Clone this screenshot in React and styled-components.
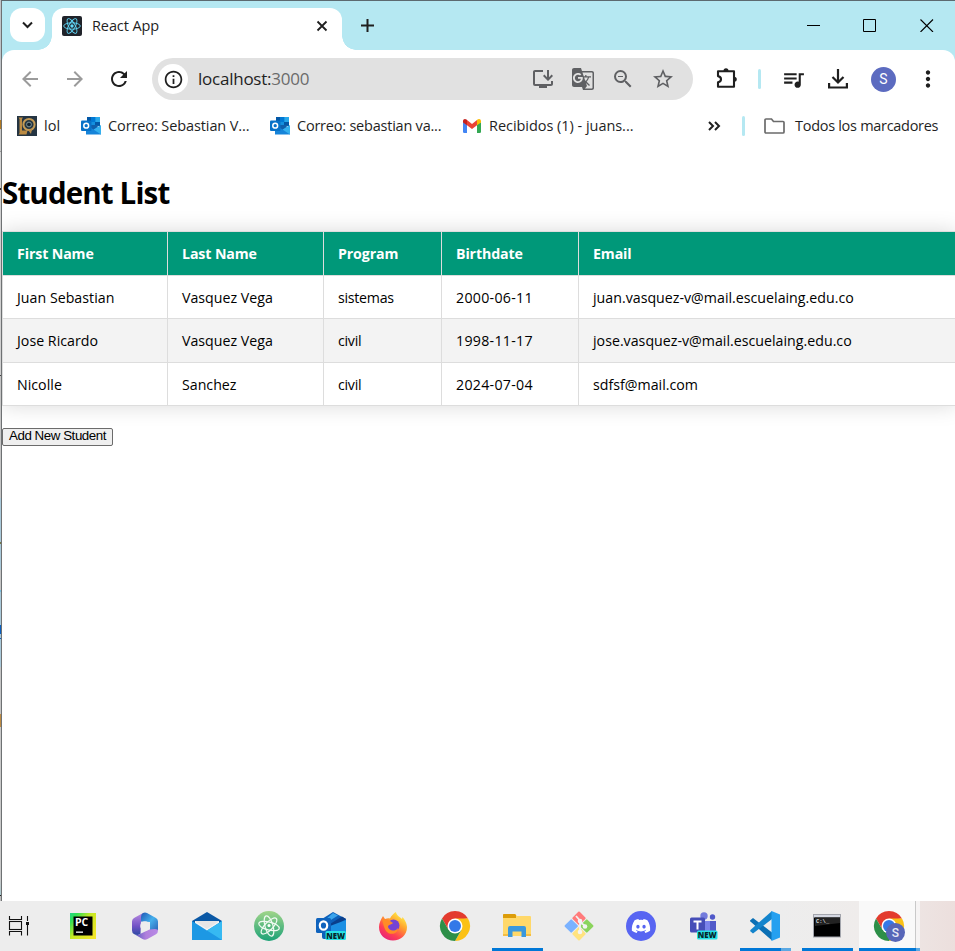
import React from 'react';
import styled, { createGlobalStyle } from 'styled-components';
import {
  MdArrowBack, MdArrowForward, MdRefresh, MdInfoOutline, MdOutlineInstallDesktop,
  MdGTranslate, MdZoomOut, MdStarBorder, MdQueueMusic, MdMoreVert,
} from 'react-icons/md';
import { FaDiscord } from 'react-icons/fa';

const GlobalStyle = createGlobalStyle`
  * { box-sizing: border-box; }
  body { margin: 0; background: #fff; overflow: hidden; font-family: "Open Sans", "Noto Sans", sans-serif; color: #000; }
  svg { display: block; flex: none; }
`;

const Desktop = styled.div`
  width: 955px; height: 951px; display: flex; flex-direction: column; overflow: hidden;
`;
const WindowArea = styled.div`
  flex: none; height: 901px; display: flex;
`;
const BackdropStrip = styled.div`
  width: 1px; flex: none;
  background: linear-gradient(to bottom, #bfc4c8 0 120px, #b27a22 120px 129px, #c9c9c9 129px 151px, #999 151px 152px,
    #d4d4d4 152px 188px, #333 188px 190px, #d0d0d0 190px 375px, #444 375px 376px, #c5c5c5 376px 498px, #a9c9da 498px 542px,
    #777748 542px 544px, #a9c9da 544px 570px, #c5c5c5 570px 590px, #79bede 590px 592px, #a9c9da 592px 625px,
    #0a5fc0 625px 634px, #a9c9da 634px 638px, #0a5fc0 638px 639px, #a9c9da 639px 667px, #c5c5c5 667px 714px,
    #bd8b43 714px 727px, #c9c9c9 727px 880px, #a9c9cf 895px, #222 895px 896px, #bbb 896px);
`;
const BrowserWindow = styled.div`
  width: 954px; flex: none; border-left: 1px solid #6e7173; border-top: 1px solid #5c6a70;
  display: flex; flex-direction: column; background: #b5e8f2; overflow: hidden;
`;

const TabStrip = styled.div`
  height: 49px; flex: none; display: flex; align-items: flex-start; padding: 7px 0 0 8px;
`;
const TabSearch = styled.div`
  width: 35px; height: 34px; border-radius: 12px; background: #fff; margin-right: 7px;
  display: flex; align-items: center; justify-content: center;
`;
const Tab = styled.div`
  position: relative; width: 290px; height: 42px; background: #fff; border-radius: 12px 12px 0 0;
  display: flex; align-items: center; padding: 0 13px 7px 10px; gap: 10px;
  &::before, &::after {
    content: ""; position: absolute; bottom: 0; width: 14px; height: 14px;
  }
  &::before { left: -14px; background: radial-gradient(circle at 0 0, transparent 13.5px, #fff 14px); }
  &::after { right: -14px; background: radial-gradient(circle at 100% 0, transparent 13.5px, #fff 14px); }
`;
const Label = styled.span`
  font-size: ${p => p.$size || 14.5}px; letter-spacing: ${p => p.$ls || 0}px; color: ${p => p.$color || '#1f1f1f'};
  white-space: pre; line-height: 20px;
`;
const Spacer = styled.div`flex: 1;`;
const NewTab = styled.div`
  height: 34px; display: flex; align-items: center; margin-left: 18px;
`;
const CaptionButtons = styled.div`
  height: 35px; display: flex; align-items: center; gap: 43px; padding-right: 21px;
`;

const Toolbar = styled.div`
  height: 58px; flex: none; background: #fff; border-radius: 12px 12px 0 0;
  display: flex; align-items: center; padding: 0 14px 0 16px;
`;
const NavButtons = styled.div`
  display: flex; align-items: center; gap: 20.7px; width: 134px;
`;
const AddressBar = styled.div`
  width: 541px; height: 42px; border-radius: 21px; background: #e1e1e1;
  display: flex; align-items: center; padding: 0 18px 0 6px;
`;
const SiteInfo = styled.div`
  width: 30px; height: 30px; border-radius: 50%; background: #fff; margin-right: 10px;
  display: flex; align-items: center; justify-content: center;
`;
const AddressActions = styled.div`
  display: flex; align-items: center; gap: 16px; color: #5f6063;
`;
const ToolbarActions = styled.div`
  flex: 1; display: flex; align-items: center; padding-left: 23px;
`;
const Gap = styled.div`width: ${p => p.$w}px; flex: none;`;
const Divider = styled.div`
  width: 3px; height: 20px; border-radius: 2px; background: #b5e8f2; flex: none;
`;
const Avatar = styled.div`
  width: 25px; height: 25px; border-radius: 50%; background: #5c6bc0; color: #fff; flex: none;
  font: 14px/25px Roboto, sans-serif; text-align: center;
`;

const BookmarksBar = styled.div`
  height: 38px; flex: none; background: #fff; display: flex; align-items: center;
  padding: 0 0 2px 15px;
`;
const Bookmark = styled.div`
  display: flex; align-items: center; gap: ${p => p.$gap || 7}px; width: ${p => p.$w}px;
`;

const Page = styled.main`
  flex: 1; background: #fff; overflow: hidden;
`;
const Title = styled.h1`
  margin: 27px 0 0; height: 58px; font-size: 29.5px; line-height: 40px; font-weight: 700;
  letter-spacing: ${p => p.$ls}px; white-space: nowrap;
`;
const StudentTable = styled.table`
  width: 955px; table-layout: fixed; border-spacing: 0; border: solid #ddd; border-width: 1px 0 0 1px;
  box-shadow: 0 0 20px rgba(0, 0, 0, .15); font-size: 14.2px;
`;
const Col = styled.col`width: ${p => p.$w}px;`;
const Row = styled.tr`
  height: ${p => p.$h}px; background: ${p => p.$bg};
`;
const HeadCell = styled.th`
  padding: 0 14px; text-align: left; color: #fff; font-weight: 700; border: solid #ddd; border-width: 0 1px 1px 0;
  letter-spacing: -.12px; white-space: nowrap;
`;
const Cell = styled.td`
  padding: 0 14px; border: solid #ddd; border-width: 0 1px 1px 0; letter-spacing: ${p => p.$ls}px; white-space: nowrap;
`;
const AddButton = styled.button`
  display: block; margin: 22px 0 0; width: 111px; height: 18px; padding: 0 0 2px; border: 1px solid #6b6b6b; border-radius: 2px;
  background: #efefef; color: #000; font: 13.33px/14px "Liberation Sans", Arial, sans-serif; white-space: nowrap;
  letter-spacing: -.45px;
`;

const Taskbar = styled.div`
  height: 50px; flex: none; display: flex; background: linear-gradient(to right, #ededed 0 780px, #efeceb 860px, #ecdfdd);
`;
const TaskViewCell = styled.div`
  width: 52px; display: flex; align-items: center; padding-left: 8px;
`;
const TaskCell = styled.div`
  position: relative; width: 62px; display: flex; align-items: center; justify-content: center;
`;
const ActiveCell = styled(TaskCell)`
  background: linear-gradient(to right, transparent 0 1px, #f9f9f9 1px 57px, #c9c9c9 57px 58px, #f6f4f4 58px 62px);
`;
const Underline = styled.div`
  position: absolute; bottom: 0; left: ${p => p.$l}px; width: ${p => p.$w}px; height: 3px;
  background: linear-gradient(to right, #0078d7 ${p => p.$solid}px, #5ca9e3 ${p => p.$solid}px);
`;

const ReactIcon = () => (
  <svg width="20" height="20" viewBox="0 0 20 20">
    <rect width="20" height="20" rx="2" fill="#20232a" />
    <g fill="none" stroke="#61dafb" strokeWidth=".9">
      <ellipse cx="10" cy="10" rx="8.3" ry="3.2" />
      <ellipse cx="10" cy="10" rx="8.3" ry="3.2" transform="rotate(60 10 10)" />
      <ellipse cx="10" cy="10" rx="8.3" ry="3.2" transform="rotate(120 10 10)" />
    </g>
    <circle cx="10" cy="10" r="1.7" fill="#61dafb" />
  </svg>
);
const Stroke = ({ w, h = w, d, sw = 2, color = '#1f1f1f', cap }) => (
  <svg width={w} height={h} viewBox={`0 0 ${w} ${h}`}>
    <path d={d} fill="none" stroke={color} strokeWidth={sw} strokeLinecap={cap} />
  </svg>
);
const Puzzle = () => (
  <svg width="22" height="22" viewBox="0 0 22 22">
    <path d="M2 3.2H18V18.700H2V14.300C4 13.900 5 12.700 5 11.200C5 9.700 4 8.500 2 8.100Z" fill="none" stroke="#1f1f1f" strokeWidth="2.1" strokeLinejoin="round" />
    <path d="M7.500 3A2.500 2.800 0 0 1 12.500 3ZM18 8.700A2.800 2.500 0 0 1 18 13.700Z" fill="#1f1f1f" />
  </svg>
);
const LolIcon = () => (
  <svg width="20" height="20" viewBox="0 0 20 20">
    <rect width="20" height="20" fill="#253543" />
    <path d="M1.5 1.5H6L5 3V14.5H10.5L9.5 18.5H1.5L2.5 17V3Z" fill="#bb8b43" />
    <circle cx="12" cy="8.5" r="5.6" fill="#263641" stroke="#c49a54" strokeWidth="2" />
    <circle cx="12" cy="8.5" r="2.4" fill="#15232c" stroke="#82969b" strokeWidth="1" />
    <path d="M11 14l3 4 1-5" fill="#b78b4b" />
  </svg>
);
const OutlookIcon = () => (
  <svg width="20" height="18" viewBox="0 0 20 18">
    <path d="M6 0H19V9H6Z" fill="#1490df" />
    <path d="M6 0H10V5H6ZM14 5H19V9H14Z" fill="#0358a7" />
    <path d="M10 0H14.500V5H10Z" fill="#0078d4" /><path d="M14.500 0H19V5H14.500Z" fill="#28a8ea" />
    <path d="M5 17.500V8H12L20 12V17.500Z" fill="#1684d9" />
    <path d="M20 8V17.500L12.500 12.500Z" fill="#35b0ee" />
    <path d="M6 8H19L12.500 12.500Z" fill="#0f5fab" />
    <rect y="3.500" width="10.500" height="10.500" rx="1" fill="#0872c8" />
    <circle cx="5.200" cy="8.700" r="2.400" fill="none" stroke="#fff" strokeWidth="1.500" />
  </svg>
);
const GmailIcon = () => (
  <svg width="18" height="14" viewBox="0 0 18 14">
    <path d="M0 3L4 5.500V14H1.200Q0 14 0 12.800Z" fill="#4285f4" />
    <path d="M18 3L14 5.500V14H16.800Q18 14 18 12.800Z" fill="#34a853" />
    <path d="M4 1L9 5L14 1V6.200L9 10L4 6.200Z" fill="#ea4335" />
    <path d="M0 2.200C0 .2 2-.6 3.500.6L4 1V6.200L0 3.500Z" fill="#c5221f" />
    <path d="M18 2.200C18 .2 16-.6 14.500.6L14 1V6.200L18 3.500Z" fill="#fbbc04" />
  </svg>
);

const TaskViewIcon = () => (
  <svg width="22" height="20" viewBox="0 0 22 20" fill="none" stroke="#111" strokeWidth="1.1">
    <path d="M1.500 0V3.500H13.500V0M1.500 19.500V15.500H13.500V19.500M19.500 0V5M19.500 9V19.500" />
    <rect x="1.500" y="5.500" width="12" height="8" />
    <rect x="18" y="6" width="3" height="3" fill="#111" stroke="none" />
  </svg>
);
const PyCharmIcon = () => (
  <svg width="26" height="26" viewBox="0 0 26 26">
    <defs><linearGradient id="pc" x1="0" y1="0" x2="1" y2=".8">
      <stop offset="0" stopColor="#21d789" /><stop offset=".18" stopColor="#30e054" /><stop offset=".5" stopColor="#c6e823" /><stop offset="1" stopColor="#f2e62a" />
    </linearGradient></defs>
    <rect width="26" height="26" fill="url(#pc)" />
    <rect x="3.500" y="3.500" width="19" height="19" fill="#000" />
    <text x="5" y="13" fontFamily="Open Sans" fontWeight="700" fontSize="10.500" fill="#fff">PC</text>
    <rect x="6" y="18.500" width="7" height="1.300" fill="#fff" />
  </svg>
);
const M365Icon = () => (
  <svg width="28" height="28" viewBox="0 0 28 28">
    <defs>
      <linearGradient id="ma" x1="0" y1="0" x2="0" y2="1"><stop offset="0" stopColor="#b98be0" /><stop offset=".6" stopColor="#7152c6" /><stop offset="1" stopColor="#2f4aa4" /></linearGradient>
      <linearGradient id="mb" x1="0" y1="0" x2="1" y2="1"><stop offset="0" stopColor="#1f57b5" /><stop offset=".5" stopColor="#45b0ec" /><stop offset="1" stopColor="#2b5fb4" /></linearGradient>
      <linearGradient id="mc" x1="0" y1="0" x2="1" y2="0"><stop offset="0" stopColor="#4e56c0" /><stop offset=".5" stopColor="#b07fdc" /><stop offset="1" stopColor="#b88ae6" /></linearGradient>
    </defs>
    <path d="M12 1L3 6Q1 7.200 1 9.500V18.500Q1 21 3 22Q6 24 9.500 22L10 9.500L15 7Z" fill="url(#ma)" />
    <path d="M12 1Q14 0 16 1L25 6Q27 7.200 27 9.500V18L22 20L19 18V10L10 9.500V5Q10 2 12 1Z" fill="url(#mb)" />
    <path d="M27 18.500Q27 21 25 22.200L16.500 27Q14 28.300 11.500 27L3 22Q7 24 10 21.500L18.500 17.500L24 17Q27 17 27 18.500Z" fill="url(#mc)" />
    <circle cx="14" cy="14" r="4.800" fill="#ededed" />
  </svg>
);
const MailIcon = () => (
  <svg width="30" height="28" viewBox="0 0 30 28">
    <path d="M0 9L15 0L30 9V12H0Z" fill="#0a58a5" />
    <path d="M3 9H27V20H3Z" fill="#f3f3f3" /><path d="M3 9H27L15 17Z" fill="#d8d8da" opacity=".5" />
    <path d="M0 9L15 18.500L30 9V28H0Z" fill="#1d98e4" /><path d="M30 9V28L15 18.500Z" fill="#36b9f2" />
  </svg>
);
const AtomIcon = () => (
  <svg width="30" height="30" viewBox="0 0 30 30">
    <defs><linearGradient id="at" x1="0" y1="0" x2="0" y2="1"><stop offset="0" stopColor="#a1d58a" /><stop offset="1" stopColor="#1ca277" /></linearGradient></defs>
    <circle cx="15" cy="15" r="15" fill="url(#at)" />
    <g fill="none" stroke="#f2faf3" strokeWidth="1.200">
      <ellipse cx="15" cy="15" rx="10.500" ry="4" transform="rotate(14 15 15)" />
      <ellipse cx="15" cy="15" rx="10.500" ry="4" transform="rotate(74 15 15)" />
      <ellipse cx="15" cy="15" rx="10.500" ry="4" transform="rotate(134 15 15)" />
    </g>
    <circle cx="15" cy="14.500" r="1.500" fill="#fff" />
  </svg>
);
const NewBadge = ({ x, y }) => (
  <g transform={`translate(${x} ${y})`}>
    <rect width="20.500" height="9" rx="1.500" fill="#27e1e5" />
    <text x="10.200" y="7.500" textAnchor="middle" fontFamily="Open Sans" fontWeight="800" fontSize="7.800" fill="#06262a">NEW</text>
  </g>
);
const OutlookNewIcon = () => (
  <svg width="30" height="28" viewBox="0 0 30 28">
    <path d="M6 7L17 0L30 7V25Q30 27 28 27H8Q6 27 6 25Z" fill="#0d5fb9" />
    <path d="M10 7L17 1L22 3.500L10 11Z" fill="#3aa4ec" /><path d="M14 12L26 4.500L30 7L16 16Z" fill="#0a3f8c" />
    <path d="M14 14L30 8V27H14Z" fill="#1c8fe3" />
    <rect y="6" width="15" height="15" rx="1.500" fill="#0f63bd" />
    <ellipse cx="7.500" cy="13.500" rx="3.700" ry="4.200" fill="none" stroke="#fff" strokeWidth="2.200" />
    <NewBadge x="9.500" y="19" />
  </svg>
);
const FirefoxIcon = () => (
  <svg width="30" height="30" viewBox="0 0 30 30">
    <defs>
      <linearGradient id="ff" x1=".85" y1=".1" x2=".25" y2="1"><stop offset="0" stopColor="#fff04a" /><stop offset=".35" stopColor="#ffa02d" /><stop offset=".7" stopColor="#ff4052" /><stop offset="1" stopColor="#e61f7c" /></linearGradient>
    </defs>
    <path d="M1 16C1 12 3 8 5 5L7 8C9 7 11 7 12 7.500C13 5 16 2 18 1C18 4 22 6 24 8L24.500 6C28 10 29 14 29 16C29 24 23 29.500 15 29.500S1 24 1 16Z" fill="url(#ff)" />
    <circle cx="15.500" cy="14.500" r="6" fill="#7543d4" />
    <path d="M4 8C8 8 9 9 12 10L15 12C14 14 10 13 10 16C11 20 17 21 20 17C20 23 12 25 8 20C6 17 5 12 4 8Z" fill="#ff8b26" />
  </svg>
);
const ChromeIcon = ({ badge }) => (
  <svg width="32" height="32" viewBox="-1 -1 32 32">
    <path d="M2 7.500A15 15 0 0 1 28 7.500L15 9L8.500 18.800Z" fill="#e33b2e" />
    <path d="M28 7.500A15 15 0 0 1 15 30L21.500 18.800L15 7.500Z" fill="#fbc116" />
    <path d="M2 7.500A15 15 0 0 0 15 30L21.500 18.800H8.500Z" fill="#2d8f48" />
    <circle cx="15" cy="15" r="7.500" fill="#fff" /><circle cx="15" cy="15" r="6" fill="#3378e8" />
    {badge && <><circle cx="21.500" cy="21.500" r="9.500" fill="#5766b8" /><text x="21.500" y="26" textAnchor="middle" fontFamily="Roboto" fontWeight="500" fontSize="12" fill="#e8eaf6">S</text></>}
  </svg>
);
const ExplorerIcon = () => (
  <svg width="28" height="24" viewBox="0 0 28 24">
    <path d="M0 1Q0 0 1 0H12L14 2H27Q28 2 28 3V22H0Z" fill="#ffd869" /><path d="M0 1Q0 0 1 0H12L13 1V4H0Z" fill="#dc9c08" />
    <path d="M5 23V14Q5 12 7 12H21Q23 12 23 14V23H18.500V17.500H9.500V23Z" fill="#3a98dd" /><path d="M0 20H5V22H0ZM23 20H28V22H23Z" fill="#f4bd42" />
  </svg>
);
const GitIcon = () => (
  <svg width="30" height="30" viewBox="0 0 30 30">
    <g transform="rotate(45 15 15)">
      <rect x="4.500" y="4.500" width="10" height="10" fill="#ff7b7b" rx="1" /><rect x="15.500" y="4.500" width="10" height="10" fill="#8bd45c" rx="1" />
      <rect x="4.500" y="15.500" width="10" height="10" fill="#7ab2ff" rx="1" /><rect x="15.500" y="15.500" width="10" height="10" fill="#ffe37f" rx="1" />
    </g>
    <path d="M12 5L16 9.500V22M16 11L21 15" fill="none" stroke="#f1f1f1" strokeWidth="1.800" />
    <g fill="#f4f4f4"><circle cx="16" cy="10" r="2.300" /><circle cx="16" cy="21" r="2.300" /><circle cx="21" cy="15.500" r="2.300" /></g>
  </svg>
);
const DiscordDisc = styled.div`
  width: 30px; height: 30px; border-radius: 50%; background: #5865f2; display: flex; align-items: center; justify-content: center;
`;
const TeamsIcon = () => (
  <svg width="30" height="28" viewBox="0 0 30 28">
    <circle cx="16" cy="4" r="3.700" fill="#737bdc" /><circle cx="24.500" cy="5" r="2.700" fill="#5059c9" />
    <path d="M20 9H28V18Q28 21 24 22L20 20Z" fill="#5059c9" /><path d="M12 9H22V22H12Z" fill="#7b83eb" />
    <rect x="2" y="5.500" width="15" height="15" rx="1.500" fill="#464eb8" />
    <path d="M5.500 9.500H13.500M9.500 9.500V17.500" stroke="#fff" strokeWidth="2" />
    <NewBadge x="9" y="18.500" />
  </svg>
);
const VsCodeIcon = () => (
  <svg width="30" height="30" viewBox="0 0 30 30">
    <path d="M0 9.500L3 7L22 21.500V29.500L1 11Q0 10.500 0 9.500Z" fill="#0b70b5" />
    <path d="M0 20L3 22.500L22 8V0L1 18.500Q0 19.500 0 20Z" fill="#1384cc" />
    <path d="M21.500 0L30 3.500V26.500L21.500 30Z" fill="#25a0f0" />
  </svg>
);
const TerminalIcon = () => (
  <svg width="28" height="24" viewBox="0 0 28 24">
    <rect x=".5" y=".5" width="27" height="22.500" fill="#000" stroke="#a3a5ac" />
    <rect x="1" y="1" width="26" height="2.500" fill="#d5d8e2" /><path d="M2 12L27 9V3.500H2Z" fill="#222" />
    <text x="3" y="8.500" fontFamily="Liberation Mono" fontSize="5.500" fontWeight="700" fill="#ddd">C:\_</text>
  </svg>
);

const columns = [
  { name: 'First Name', width: 165, ls: 0.02 },
  { name: 'Last Name', width: 156, ls: 0 },
  { name: 'Program', width: 118, ls: -0.27 },
  { name: 'Birthdate', width: 137, ls: 0.28 },
  { name: 'Email', width: 378, ls: 0.01 },
];
const students = [
  { h: 43, bg: '#fff', cells: ['Juan Sebastian', 'Vasquez Vega', 'sistemas', '2000-06-11', 'juan.vasquez-v@mail.escuelaing.edu.co'] },
  { h: 44, bg: '#f3f3f3', cells: ['Jose Ricardo', 'Vasquez Vega', 'civil', '1998-11-17', 'jose.vasquez-v@mail.escuelaing.edu.co'] },
  { h: 43, bg: '#fff', cells: ['Nicolle', 'Sanchez', 'civil', '2024-07-04', 'sdfsf@mail.com'] },
];
const tasks = [
  { icon: <PyCharmIcon /> }, { icon: <M365Icon /> }, { icon: <MailIcon /> }, { icon: <AtomIcon /> },
  { icon: <OutlookNewIcon /> }, { icon: <FirefoxIcon /> }, { icon: <ChromeIcon /> },
  { icon: <ExplorerIcon />, l: 6, w: 51, solid: 51 }, { icon: <GitIcon /> },
  { icon: <DiscordDisc><FaDiscord size={20} color="#fff" /></DiscordDisc> }, { icon: <TeamsIcon /> },
  { icon: <VsCodeIcon />, l: 6, w: 51, solid: 41 }, { icon: <TerminalIcon />, l: 6, w: 51, solid: 51 },
  { icon: <ChromeIcon badge />, l: 1, w: 61, solid: 57, active: true },
];

export default function App() {
  return (
    <Desktop>
      <GlobalStyle />
      <WindowArea>
        <BackdropStrip />
        <BrowserWindow>
          <TabStrip>
            <TabSearch><Stroke w={11} h={8} d="M1 1.500L5.500 6L10 1.500" /></TabSearch>
            <Tab>
              <ReactIcon />
              <Label $ls={-0.1}>React App</Label>
              <Spacer />
              <Stroke w={14} d="M2.500 2.500L11.500 11.500M11.500 2.500L2.500 11.500" sw={1.8} />
            </Tab>
            <NewTab><Stroke w={14} d="M7.500 1V14M1 7.500H14" /></NewTab>
            <Spacer />
            <CaptionButtons>
              <Stroke w={14} h={13} d="M1 6.500H14" sw={1} color="#000" />
              <Stroke w={14} h={13} d="M.5 .5H12.500V12.500H.5Z" sw={1} color="#000" />
              <Stroke w={14} h={13} d="M.5 .5L13 13M13 .5L.5 13" sw={1.1} color="#000" />
            </CaptionButtons>
          </TabStrip>
          <Toolbar>
            <NavButtons>
              <MdArrowBack size={24} color="#9b9b9b" />
              <MdArrowForward size={24} color="#9b9b9b" />
              <MdRefresh size={24} color="#1f1f1f" />
            </NavButtons>
            <AddressBar>
              <SiteInfo><MdInfoOutline size={21} color="#1f1f1f" /></SiteInfo>
              <Label $size={17} $ls={-0.24}>localhost:</Label>
              <Label $size={17} $ls={-0.24} $color="#6b6b6b">3000</Label>
              <Spacer />
              <AddressActions>
                <MdOutlineInstallDesktop size={24} />
                <MdGTranslate size={24} />
                <MdZoomOut size={24} />
                <MdStarBorder size={24} />
              </AddressActions>
            </AddressBar>
            <ToolbarActions>
              <Puzzle />
              <Gap $w={20} />
              <Divider />
              <Gap $w={20} />
              <MdQueueMusic size={25} color="#1f1f1f" />
              <Spacer />
              <Stroke w={20} h={20} d="M10 0V13M4.500 8L10 13.500L15.500 8M1.100 14V18.500H18.900V14" sw={2.2} />
              <Gap $w={23} />
              <Avatar>S</Avatar>
              <Gap $w={19} />
              <MdMoreVert size={26} color="#1f1f1f" />
            </ToolbarActions>
          </Toolbar>
          <BookmarksBar>
            <Bookmark $w={64}><LolIcon /><Label $ls={0.1}>lol</Label></Bookmark>
            <Bookmark $w={189}><OutlookIcon /><Label $ls={-0.1}>Correo: Sebastian V...</Label></Bookmark>
            <Bookmark $w={193}><OutlookIcon /><Label $ls={-0.22}>Correo: sebastian va...</Label></Bookmark>
            <Bookmark $w={244} $gap={8}><GmailIcon /><Label $ls={-0.04}>Recibidos (1) - juans...</Label></Bookmark>
            <Bookmark $w={35}><Stroke w={14} h={10} d="M2 1L6 5L2 9M8 1L12 5L8 9" /></Bookmark>
            <Bookmark $w={22}><Divider /></Bookmark>
            <Bookmark $w={190} $gap={10}>
              <svg width="21" height="16" viewBox="0 0 21 16"><path d="M1 2Q1 1 2 1H7.500L9.500 3.500H19Q20 3.500 20 4.500V14Q20 15 19 15H2Q1 15 1 14Z" fill="none" stroke="#6b6b6b" strokeWidth="1.700" /></svg>
              <Label $ls={-0.29}>Todos los marcadores</Label>
            </Bookmark>
          </BookmarksBar>
          <Page>
            <Title $ls={-0.85}>Student List</Title>
            <StudentTable>
              <colgroup>{columns.map(c => <Col key={c.name} $w={c.width} />)}</colgroup>
              <thead>
                <Row $h={44} $bg="#009879">{columns.map(c => <HeadCell key={c.name}>{c.name}</HeadCell>)}</Row>
              </thead>
              <tbody>
                {students.map(s => (
                  <Row key={s.cells[0]} $h={s.h} $bg={s.bg}>
                    {s.cells.map((text, i) => <Cell key={i} $ls={columns[i].ls}>{text}</Cell>)}
                  </Row>
                ))}
              </tbody>
            </StudentTable>
            <AddButton>Add New Student</AddButton>
          </Page>
        </BrowserWindow>
      </WindowArea>
      <Taskbar>
        <TaskViewCell><TaskViewIcon /></TaskViewCell>
        {tasks.map((t, i) => {
          const Item = t.active ? ActiveCell : TaskCell;
          return <Item key={i}>{t.icon}{t.w && <Underline $l={t.l} $w={t.w} $solid={t.solid} />}</Item>;
        })}
      </Taskbar>
    </Desktop>
  );
}
